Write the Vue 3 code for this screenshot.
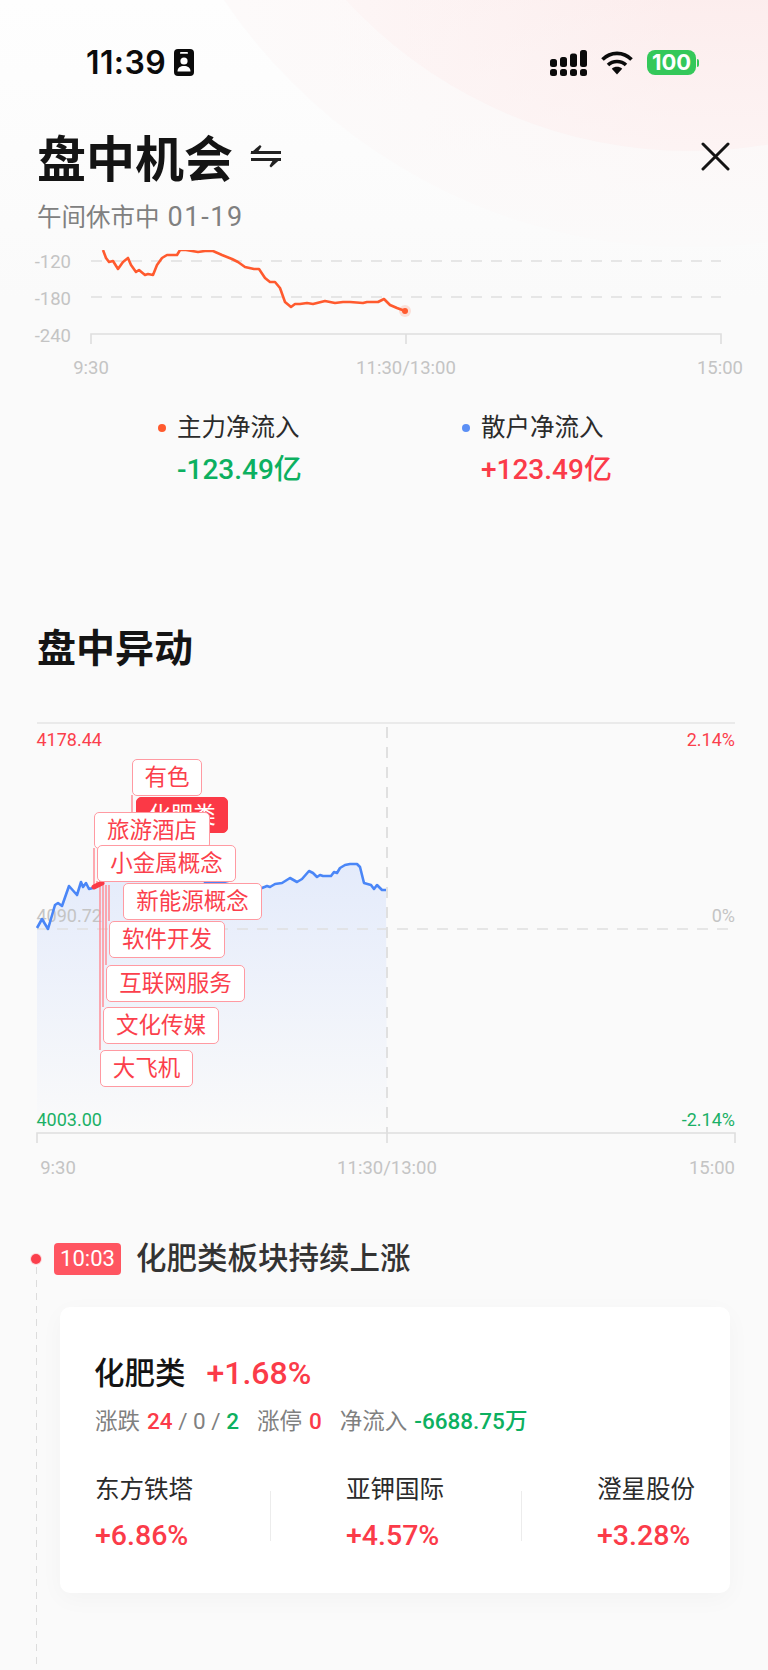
<template>
  <div class="page">
    <div class="glow glow-outer"></div>
    <div class="glow glow-inner"></div>

    <div class="status">
      <div class="status-left">
        <span class="time">11:39</span>
        <svg class="focus" width="20" height="27" viewBox="0 0 20 27">
          <rect width="20" height="27" rx="4" fill="#0b0b0b" />
          <rect x="6" y="3" width="8" height="1.8" rx="0.9" fill="#fff" />
          <circle cx="10" cy="12" r="3.6" fill="#fff" />
          <path d="M3.5 22.5c0-3.8 2.9-5.5 6.5-5.5s6.5 1.7 6.5 5.5z" fill="#fff" />
        </svg>
      </div>
      <div class="status-right">
        <svg width="38" height="26" viewBox="0 0 38 26">
          <g fill="#0b0b0b">
            <rect x="0" y="9" width="7" height="8" rx="2.5" />
            <rect x="10" y="7" width="7" height="10" rx="2.5" />
            <rect x="20" y="3.5" width="7" height="13.5" rx="2.5" />
            <rect x="30" y="0" width="7" height="17" rx="2.5" />
            <rect x="0" y="19" width="7" height="7" rx="2.5" />
            <rect x="10" y="19" width="7" height="7" rx="2.5" />
            <rect x="20" y="19" width="7" height="7" rx="2.5" />
            <rect x="30" y="19" width="7" height="7" rx="2.5" />
          </g>
        </svg>
        <svg class="wifi" width="32" height="24" viewBox="0 0 32 24">
          <g fill="none" stroke="#0b0b0b" stroke-width="3.6">
            <path d="M1.5 8.5C9.5 0.3 22.5 0.3 30.5 8.5" />
            <path d="M7 14c4.8-4.6 13.2-4.6 18 0" />
          </g>
          <path d="M10.8 17.8c3-2.6 7.4-2.6 10.4 0L16 23.5z" fill="#0b0b0b" />
        </svg>
        <div class="battery">100</div>
        <span class="battery-nub"></span>
      </div>
    </div>

    <header class="head">
      <div class="head-row">
        <h1>盘中机会</h1>
        <svg class="swap" width="33" height="26" viewBox="0 0 33 26">
          <path d="M2 9.500h30M2 16.500h30" fill="none" stroke="#222" stroke-width="2.800" />
          <path d="M1 10.500L11 2l1.500 1.500-4 6z" fill="#222" />
          <path d="M32 15.500L22 24.500l-1.500-1.500 4-7z" fill="#222" />
        </svg>
        <svg class="close" width="29" height="29" viewBox="0 0 29 29">
          <path d="M2 2l25 25M27 2L2 27" fill="none" stroke="#141414" stroke-width="3" stroke-linecap="round" />
        </svg>
      </div>
      <p>午间休市中 <span class="date">01-19</span></p>
    </header>

    <svg class="flow-chart" width="768" height="130" viewBox="0 250 768 130">
      <path d="M91 261H721M91 297H721" stroke="#e6e6e6" stroke-width="2" stroke-dasharray="11 9" fill="none" />
      <path d="M91 344V334H721V344M406 334V344" stroke="#dedede" stroke-width="1.600" fill="none" />
      <polyline :points="flowLine" fill="none" stroke="#ff5a2e" stroke-width="2.600" stroke-linejoin="round" />
      <circle cx="405" cy="311" r="6" fill="#ff5a2e" opacity="0.16" />
      <circle cx="405" cy="311" r="3" fill="#ff5a2e" />
      <g class="axis-text" fill="#c4c4c4">
        <text x="71" y="268" text-anchor="end">-120</text>
        <text x="71" y="305" text-anchor="end">-180</text>
        <text x="71" y="342" text-anchor="end">-240</text>
        <text x="91" y="374" text-anchor="middle">9:30</text>
        <text x="406" y="374" text-anchor="middle">11:30/13:00</text>
        <text x="743" y="374" text-anchor="end">15:00</text>
      </g>
    </svg>

    <div class="legend">
      <div class="legend-item">
        <i class="dot orange"></i>
        <span class="legend-name">主力净流入</span>
        <span class="legend-val green">-123.49亿</span>
      </div>
      <div class="legend-item">
        <i class="dot blue"></i>
        <span class="legend-name">散户净流入</span>
        <span class="legend-val red">+123.49亿</span>
      </div>
    </div>

    <h2 class="section-title">盘中异动</h2>

    <div class="trend">
      <svg width="768" height="465" viewBox="0 715 768 465">
        <defs>
          <linearGradient id="trendFill" x1="0" y1="0" x2="0" y2="1">
            <stop offset="0" stop-color="#e4ebfb" />
            <stop offset="1" stop-color="#fafafa" />
          </linearGradient>
        </defs>
        <path d="M37 723H735" stroke="#e4e4e4" stroke-width="1.600" fill="none" />
        <polygon :points="trendArea" fill="url(#trendFill)" />
        <path d="M37 929H735" stroke="#dfdfdf" stroke-width="1.600" stroke-dasharray="11 9" fill="none" />
        <path d="M387 727V1133" stroke="#e0e0e0" stroke-width="2" stroke-dasharray="11 9" fill="none" />
        <path d="M37 1143V1133H735V1143M387 1133V1143" stroke="#dedede" stroke-width="1.600" fill="none" />
        <g class="trend-text">
          <text x="36.500" y="746" fill="#fb3f4c">4178.44</text>
          <text x="735" y="746" text-anchor="end" fill="#fb3f4c">2.14%</text>
          <text x="36.500" y="922" fill="#c4c4c4">4090.72</text>
          <text x="735" y="922" text-anchor="end" fill="#c4c4c4">0%</text>
          <text x="36.500" y="1126" fill="#1bb066">4003.00</text>
          <text x="735" y="1126" text-anchor="end" fill="#1bb066">-2.14%</text>
        </g>
        <polyline :points="trendLine" fill="none" stroke="#4a86f7" stroke-width="2.600" stroke-linejoin="round" />
        <path d="M94 885V848M97 885V881M100 885V1050M103 885V1007M106 885V965M109 885V921M132 795V812M136 833V845" stroke="#ff8f98" stroke-width="1.500" fill="none" />
        <path d="M94 887L102 883" stroke="#fb3946" stroke-width="5" stroke-linecap="round" fill="none" />
        <g class="axis-text" fill="#c4c4c4">
          <text x="58" y="1174" text-anchor="middle">9:30</text>
          <text x="387" y="1174" text-anchor="middle">11:30/13:00</text>
          <text x="735" y="1174" text-anchor="end">15:00</text>
        </g>
      </svg>
      <span
        v-for="tag in tags"
        :key="tag.name"
        class="tag"
        :class="{ active: tag.active }"
        :style="{ left: tag.x + 'px', top: tag.y - 715 + 'px', width: tag.w + 'px', height: tag.h + 'px' }"
      >{{ tag.name }}</span>
    </div>

    <section class="timeline">
      <i class="timeline-line"></i>
      <i class="timeline-dot"></i>
      <div class="event">
        <span class="event-time">10:03</span>
        <span class="event-title">化肥类板块持续上涨</span>
      </div>
      <div class="card">
        <div class="card-head">
          <span class="card-name">化肥类</span>
          <span class="card-pct red">+1.68%</span>
        </div>
        <div class="card-stats">
          <span>涨跌</span>
          <span class="num strong red first">24</span>
          <span class="num"> / 0 / </span>
          <span class="num strong green">2</span>
          <span class="gap-left">涨停</span>
          <span class="num strong red first">0</span>
          <span class="gap-left">净流入</span>
          <span class="num strong green first">-6688.75万</span>
        </div>
        <div class="stocks">
          <template v-for="(s, i) in stocks" :key="s.name">
            <div class="stock">
              <div class="stock-name">{{ s.name }}</div>
              <div class="stock-pct red">{{ s.pct }}</div>
            </div>
            <i v-if="i < stocks.length - 1" class="stock-divider"></i>
          </template>
        </div>
      </div>
    </section>
  </div>
</template>

<script setup>
const flowPoints = [
  [103, 250], [106, 258], [109, 262], [113, 261], [118, 269], [123, 262], [128, 258], [131, 265],
  [136, 272], [139, 270], [145, 275], [148, 274], [153, 275], [157, 265], [162, 258], [167, 255],
  [177, 255], [180, 250], [186, 250], [192, 251], [198, 252], [205, 251], [213, 251], [222, 255], [232, 259],
  [238, 262], [245, 267], [254, 269], [259, 269], [265, 278], [270, 282], [275, 282], [280, 288],
  [285, 302], [291, 307], [295, 304], [300, 304], [307, 303], [313, 304], [325, 301], [335, 303],
  [343, 302], [350, 302], [363, 303], [367, 302], [378, 302], [384, 299], [390, 305], [397, 308],
  [405, 311]
]

const trendPoints = [
  [37, 928], [42, 919], [48, 929], [55, 905], [58, 903], [62, 906], [69, 886], [77, 895], [81, 882],
  [83, 887], [86, 883], [89, 889], [93, 888], [102, 883], [110, 870], [198, 870], [205, 882], [220, 882],
  [236, 886], [262, 888], [267, 886], [270, 887], [275, 884], [282, 883], [290, 878], [297, 882],
  [302, 879], [309, 871], [313, 873], [317, 877], [320, 875], [323, 876], [331, 876], [334, 872],
  [337, 873], [340, 868], [345, 865], [350, 864], [357, 864], [360, 867], [364, 883], [371, 885],
  [374, 889], [377, 885], [382, 890], [386, 890]
]

const flowLine = flowPoints.map((p) => p.join(',')).join(' ')
const trendLine = trendPoints.map((p) => p.join(',')).join(' ')
const trendArea = `${trendLine} 387,1133 37,1133`

const tags = [
  { name: '有色', x: 132, y: 759, w: 70, h: 37 },
  { name: '化肥类', x: 136, y: 797, w: 92, h: 36, active: true },
  { name: '旅游酒店', x: 94, y: 812, w: 116, h: 37 },
  { name: '小金属概念', x: 97, y: 845, w: 139, h: 37 },
  { name: '新能源概念', x: 123, y: 883, w: 139, h: 37 },
  { name: '软件开发', x: 109, y: 921, w: 116, h: 37 },
  { name: '互联网服务', x: 106, y: 965, w: 139, h: 37 },
  { name: '文化传媒', x: 103, y: 1007, w: 116, h: 37 },
  { name: '大飞机', x: 100, y: 1050, w: 93, h: 37 }
]

const stocks = [
  { name: '东方铁塔', pct: '+6.86%' },
  { name: '亚钾国际', pct: '+4.57%' },
  { name: '澄星股份', pct: '+3.28%' }
]
</script>

<style>
body {
  background: #fafafa;
}
</style>

<style scoped>
.page {
  position: relative;
  width: 768px;
  height: 1670px;
  overflow: hidden;
  background: linear-gradient(#fefefe, #fafafa 300px);
  font-family: Roboto, "Noto Sans CJK SC", sans-serif;
  color: #141414;
}

.glow {
  position: absolute;
  border-radius: 50%;
}

.glow-outer {
  left: 127px;
  top: -879px;
  width: 1126px;
  height: 1126px;
  background:
    linear-gradient(transparent 76%, #fbfafa 100%),
    linear-gradient(to right, #fdfafa 10%, #fdf5f5 50%);
}

.glow-inner {
  left: 223px;
  top: -783px;
  width: 934px;
  height: 934px;
  background:
    linear-gradient(transparent 80%, rgba(253, 245, 245, 0.8) 100%),
    linear-gradient(to right, #fdf6f6 12%, #fcecec 48%);
}

.status {
  position: relative;
  display: flex;
  justify-content: space-between;
  height: 27px;
  padding: 49px 69px 0 86px;
}

.status-left,
.status-right {
  display: flex;
  align-items: center;
}

.time {
  font-family: Inter, sans-serif;
  font-size: 32px;
  font-weight: 600;
  letter-spacing: 0.4px;
  color: #0b0b0b;
}

.focus {
  margin-left: 8px;
}

.wifi {
  margin-left: 13px;
}

.battery {
  width: 49px;
  height: 25px;
  margin-left: 14px;
  border-radius: 8px;
  background: #34c85a;
  color: #fff;
  font-family: Inter, sans-serif;
  font-size: 22px;
  font-weight: 700;
  line-height: 25px;
  text-align: center;
}

.battery-nub {
  width: 2px;
  height: 8px;
  margin-left: 1px;
  border-radius: 0 3px 3px 0;
  background: #34c85a;
}

.head {
  position: relative;
  padding: 56px 38px 0 37px;
}

.head-row {
  display: flex;
  align-items: center;
  height: 48px;
}

.head h1 {
  margin: 0;
  font-family: "Noto Sans CJK SC", sans-serif;
  font-size: 49px;
  font-weight: 700;
  line-height: 48px;
}

.swap {
  margin-left: 16px;
}

.close {
  margin-left: auto;
}

.head p {
  height: 30px;
  margin: 23px 0 0;
  font-size: 24.500px;
  line-height: 30px;
  color: #808080;
}

.date {
  margin-left: 2px;
  font-size: 27px;
  line-height: 1;
  letter-spacing: 1.600px;
}

.flow-chart {
  position: relative;
  display: block;
  margin-top: 17px;
}

.axis-text {
  font-size: 18.500px;
}

.trend-text {
  font-size: 18px;
}

.legend {
  display: grid;
  grid-template-columns: 304px 304px;
  margin-top: 33px;
  padding-left: 158px;
}

.legend-item {
  display: grid;
  grid-template-columns: 19px auto;
  row-gap: 10px;
  align-items: center;
}

.dot {
  width: 8px;
  height: 8px;
  border-radius: 50%;
}

.orange {
  background: #ff5a2e;
}

.blue {
  background: #5b8ff5;
}

.legend-name {
  font-size: 24.500px;
  line-height: 30px;
  color: #2b2b2b;
}

.legend-val {
  grid-column: 2;
  font-size: 28px;
  font-weight: 500;
  line-height: 34px;
}

.red {
  color: #fb3b49;
}

.green {
  color: #0cb060;
}

.section-title {
  margin: 135px 0 0 37px;
  font-family: "Noto Sans CJK SC", sans-serif;
  font-size: 39px;
  font-weight: 700;
  line-height: 46px;
}

.trend {
  position: relative;
  height: 465px;
  margin-top: 47px;
}

.trend svg {
  display: block;
}

.tag {
  position: absolute;
  box-sizing: border-box;
  display: flex;
  align-items: center;
  justify-content: center;
  padding-bottom: 5px;
  border: 1.500px solid #ff9aa2;
  border-radius: 5px;
  background: #fff;
  color: #fb3f4c;
  font-family: "Noto Sans CJK SC", sans-serif;
  font-size: 22.500px;
  white-space: nowrap;
}

.tag.active {
  border-color: #fb3946;
  background: #fb3946;
  color: #fff;
}

.timeline {
  position: relative;
  margin-top: 63px;
}

.timeline-line {
  position: absolute;
  left: 36px;
  top: 24px;
  width: 1px;
  height: 440px;
  background: repeating-linear-gradient(#dcdcdc 0 7px, transparent 7px 13px);
}

.timeline-dot {
  position: absolute;
  left: 31px;
  top: 11px;
  width: 10px;
  height: 10px;
  border-radius: 50%;
  background: #fb3f4c;
  box-shadow: 0 0 0 1px #fcd5d8;
}

.event {
  display: flex;
  align-items: center;
  height: 32px;
  padding-left: 54px;
}

.event-time {
  width: 67px;
  height: 32px;
  border-radius: 4px;
  background: #ff5561;
  color: #fff;
  font-size: 22px;
  line-height: 32px;
  text-align: center;
}

.event-title {
  margin-left: 15px;
  font-size: 30.500px;
  font-weight: 500;
  line-height: 32px;
  color: #333;
}

.card {
  height: 286px;
  box-sizing: border-box;
  margin: 32px 38px 0 60px;
  padding: 46px 0 0 35px;
  border-radius: 10px;
  background: #fff;
  box-shadow: 0 6px 24px rgba(0, 0, 0, 0.03);
}

.card-head {
  display: flex;
  align-items: center;
  height: 40px;
}

.card-name {
  margin-left: -1px;
  padding-bottom: 5px;
  font-family: "Noto Sans CJK SC", sans-serif;
  font-size: 30.500px;
  font-weight: 500;
}

.card-pct {
  margin-left: 21px;
  font-size: 32px;
  font-weight: 500;
}

.card-stats {
  display: flex;
  margin-top: 13px;
  font-size: 22.500px;
  line-height: 30px;
  color: #808080;
}

.card-stats .num {
  white-space: pre;
}

.card-stats .strong {
  font-weight: 500;
}

.card-stats .first {
  margin-left: 7px;
}

.card-stats .gap-left {
  margin-left: 18px;
}

.stocks {
  display: flex;
  margin-top: 38px;
}

.stock {
  flex: none;
  width: 175px;
}

.stock-divider {
  flex: none;
  width: 1px;
  height: 50px;
  margin: 17px 75px 0 0;
  background: #ececec;
}

.stock-name {
  font-size: 24.500px;
  line-height: 32px;
  color: #2b2b2b;
  white-space: nowrap;
}

.stock-pct {
  margin-top: 12px;
  font-size: 28.500px;
  font-weight: 500;
  line-height: 36px;
  white-space: nowrap;
}
</style>
